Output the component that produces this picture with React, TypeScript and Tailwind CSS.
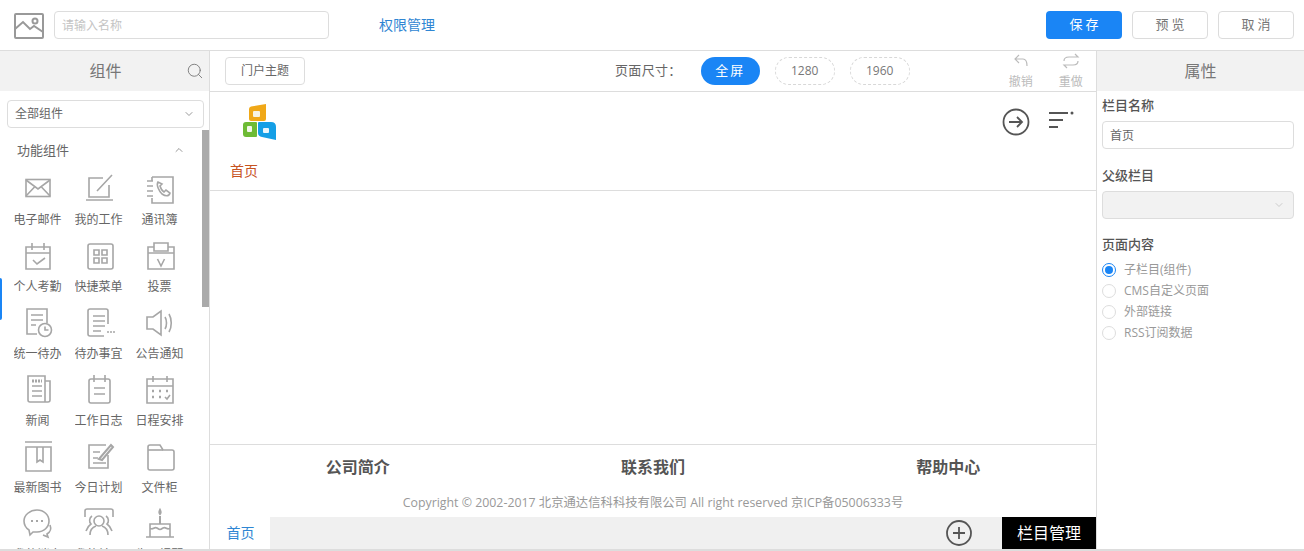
import { ReactNode } from 'react'
import { ChevronDown, ChevronUp, Search } from 'lucide-react'

const Svg = ({ children }: { children: ReactNode }) => (
  <svg
    viewBox="0 0 32 32"
    className="h-8 w-8"
    fill="none"
    stroke="#a6a6a6"
    strokeWidth="1.6"
  >
    {children}
  </svg>
)

const widgets: { label: string; icon: ReactNode }[] = [
  {
    label: '电子邮件',
    icon: (
      <>
        <rect x="4" y="7.5" width="24" height="17" />
        <path d="M4 8l12 9 12-9M4 24l9-9.5M28 24l-9-9.5" />
      </>
    ),
  },
  {
    label: '我的工作',
    icon: (
      <>
        <path d="M20 6H6v19h20V13" />
        <path d="M14 19L29 3M3 28h27" />
      </>
    ),
  },
  {
    label: '通讯簿',
    icon: (
      <>
        <path d="M8 5h21v26H8v-5M8 9V5" />
        <path d="M3 9h6M3 14h6M3 19h6M3 24h6" />
        <path d="M14 10c-2 3 1 9 4 12 3 2 7 3 8-1l-4-3-2 2c-2-1-3-3-4-6l2-2z" />
      </>
    ),
  },
  {
    label: '个人考勤',
    icon: (
      <>
        <path d="M4 8h24v22H4zM4 14h24M10 4v7M22 4v7" />
        <path d="M11 21l4 4 8-6" />
      </>
    ),
  },
  {
    label: '快捷菜单',
    icon: (
      <>
        <rect x="5" y="5" width="25" height="25" rx="2" />
        <path d="M11 11h5v5h-5zM19 11h5v5h-5zM11 19h5v5h-5zM19 19h5v5h-5z" />
      </>
    ),
  },
  {
    label: '投票',
    icon: (
      <>
        <path d="M10 8H4v22h26V8h-6" />
        <path d="M10 4h14v8H10zM4 14h26" />
        <path d="M13.5 20l3.5 7 3.500-7" />
      </>
    ),
  },
  {
    label: '统一待办',
    icon: (
      <>
        <path d="M15 28H5V3h20v14" />
        <path d="M9 9h12M9 14h12M9 19h5" />
        <circle cx="23" cy="24" r="6.500" />
        <path d="M23 20.500V24h3.500" />
      </>
    ),
  },
  {
    label: '待办事宜',
    icon: (
      <>
        <path d="M25 18V5a2 2 0 0 0-2-2H7a2 2 0 0 0-2 2v23a2 2 0 0 0 2 2h14" />
        <path d="M10 10h12M10 15h12M10 20h12M10 25h8" />
        <path d="M24 26h2M27 26h2M30 26h2" />
      </>
    ),
  },
  {
    label: '公告通知',
    icon: (
      <>
        <path d="M3 11h6l8-6v24l-8-6H3z" />
        <path d="M21 11c2 3 2 9 0 12M25 8c3 5 3 13 0 18" />
      </>
    ),
  },
  {
    label: '新闻',
    icon: (
      <>
        <path d="M6 3h17v26H8a2 2 0 0 1-2-2zM23 8h5v19a2 2 0 0 1-2 2h-3" />
        <path d="M10 13h10M10 18h10M10 23h10" />
        <path d="M10 8h10" strokeWidth="3" strokeDasharray="2 1" />
      </>
    ),
  },
  {
    label: '工作日志',
    icon: (
      <>
        <rect x="6" y="6" width="21" height="24" rx="2" />
        <path d="M11 2v7M22 2v7M11 15h11M11 21h11" />
      </>
    ),
  },
  {
    label: '日程安排',
    icon: (
      <>
        <path d="M3 6h26v24H3zM3 13h26M9 3v6M23 3v6" />
        <path
          d="M8 18h2M15 18h2M22 18h2M8 24h2M15 24h2"
          strokeWidth="2.500"
        />
        <path d="M21 24l2 2 3-4" />
      </>
    ),
  },
  {
    label: '最新图书',
    icon: (
      <>
        <path d="M3 2h27M4 7h25v24H4z" />
        <path d="M15 7v15l3-2 3 2V7" />
      </>
    ),
  },
  {
    label: '今日计划',
    icon: (
      <>
        <path d="M25 15v13H6V5h17" />
        <path d="M10 12h7M10 18h5M10 23h13" />
        <path d="M16 19l12-14 2 2-11 13z" strokeWidth="2" />
      </>
    ),
  },
  {
    label: '文件柜',
    icon: (
      <>
        <path d="M4 7a2 2 0 0 1 2-2h10l3 5h9a2 2 0 0 1 2 2v16a2 2 0 0 1-2 2H6a2 2 0 0 1-2-2z" />
        <path d="M4 10h15" />
      </>
    ),
  },
  {
    label: '我的消息',
    icon: (
      <>
        <path d="M15 3c7 0 12 5 12 11s-5 11-12 11l-4 0-3 3-1-5C4 21 2 18 2 14 2 8 8 3 15 3z" />
        <path d="M28 18c2 5 0 7-3 9l1 3-5-2" />
        <path d="M9 14h2M14 14h2M19 14h2" strokeWidth="2" />
      </>
    ),
  },
  {
    label: '我的社区',
    icon: (
      <>
        <path d="M2 10V4a2 2 0 0 1 2-2h24a2 2 0 0 1 2 2v6" />
        <circle cx="16" cy="14" r="5" />
        <path d="M7 28c0-6 3-8 6-9M25 28c0-6-3-8-6-9M9 9c-3 2-3 6-1 8-3 2-4 4-5 7M23 9c3 2 3 6 1 8 3 2 4 4 5 7" />
      </>
    ),
  },
  {
    label: '生日提醒',
    icon: (
      <>
        <path d="M2 30h28M6 30V17h20v13M6 21c3 3 4-2 7 0s3 2 6 0 4 3 7 0" />
        <path d="M16 17V9M16 3c-1 2-1 3 0 4 1-1 1-2 0-4z" strokeWidth="2" />
      </>
    ),
  },
]

const Logo = () => (
  <svg viewBox="0 0 33 36" className="h-9 w-[33px]">
    <path d="M6 5q0-2 2-2.500L23 0v15q0 2-2 2H8q-2 0-2-2z" fill="#f0a818" />
    <rect x="10" y="7" width="7" height="6" rx="1" fill="#f7f3e4" />
    <path d="M0 21q0-3 3-3h10q1 0 1 1v13q0 1-1 1H3q-3 0-3-3z" fill="#6ebb35" />
    <rect x="4" y="22" width="5" height="6" rx="1" fill="#f2f7ea" />
    <path d="M15 19q0-1 1-1h12q5 0 5 5v13l-14-3q-4-1-4-4z" fill="#159fe6" />
    <rect x="20" y="24" width="6" height="5" rx="1" fill="#eaf6fc" />
  </svg>
)

const TopButton = ({ text, primary }: { text: string; primary?: boolean }) => (
  <button
    className={`h-7 w-[76px] rounded pl-[3px] text-[13px] tracking-[3px] ${
      primary
        ? 'bg-[#1a85f5] text-white'
        : 'border border-[#dcdcdc] bg-white text-[#777]'
    }`}
  >
    {text}
  </button>
)

const Label = ({ text }: { text: string }) => (
  <div className="text-[13px] leading-5 font-medium text-[#555]">{text}</div>
)

const Radio = ({ text, checked }: { text: string; checked?: boolean }) => (
  <label className="flex h-[21px] items-center gap-2 text-xs text-[#999]">
    <span
      className={`flex h-3.5 w-3.5 items-center justify-center rounded-full border bg-white ${
        checked ? 'border-[#1a85f5]' : 'border-[#ddd]'
      }`}
    >
      {checked && <span className="h-2 w-2 rounded-full bg-[#1a85f5]" />}
    </span>
    {text}
  </label>
)

const DashedPill = ({ text }: { text: string }) => (
  <span className="flex h-7 w-[60px] items-center justify-center rounded-full border border-dashed border-[#d8d8d8] text-xs text-[#777]">
    {text}
  </span>
)

const App = () => {
  return (
    <div
      className="flex h-[551px] w-[1304px] flex-col overflow-hidden bg-white text-[#666]"
      style={{ fontFamily: '"Open Sans", "Noto Sans CJK SC", sans-serif' }}
    >
      {/* top bar */}
      <header className="flex h-[51px] shrink-0 items-center border-b border-[#ddd] pr-2.5 pl-3.5">
        <svg viewBox="0 0 30 26" className="mt-0.5 h-[26px] w-[30px]" fill="none" stroke="#999" strokeWidth="2">
          <rect x="1" y="1" width="28" height="24" rx="1" />
          <path d="M1 16l8-7 7 7 4-3 9 6" />
          <circle cx="21" cy="8" r="2.500" />
        </svg>
        <input
          placeholder="请输入名称"
          className="ml-2.5 h-7 w-[275px] rounded border border-[#ddd] px-[7px] text-xs placeholder:text-[#c4c4c4]"
        />
        <a className="ml-[50px] text-sm text-[#2f86d3]">权限管理</a>
        <div className="ml-auto flex gap-2.5">
          <TopButton text="保存" primary />
          <TopButton text="预览" />
          <TopButton text="取消" />
        </div>
      </header>

      <div className="flex min-h-0 flex-1 border-b-2 border-[#ddd]">
        {/* components panel */}
        <aside className="relative flex w-[210px] shrink-0 flex-col overflow-hidden border-r border-[#ddd]">
          <div className="relative flex h-10 shrink-0 items-center justify-center bg-[#f2f2f2] text-base text-[#777]">
            <span className="ml-[2px]">组件</span>
            <Search className="absolute top-[11px] right-[5px] h-[18px] w-[18px] text-[#777]" strokeWidth={1.2} />
          </div>
          <div className="mt-[9px] mr-[5px] ml-[7px] flex h-7 shrink-0 items-center justify-between rounded border border-[#ddd] pr-2 pl-[7px] text-xs">
            全部组件
            <ChevronDown className="h-3 w-3 text-[#999]" />
          </div>
          <div className="flex items-center justify-between pt-3 pr-6 pl-[17px] text-[13px] leading-5">
            功能组件
            <ChevronUp className="h-3 w-3 text-[#999]" />
          </div>
          <div className="grid grid-cols-[61px_61px_61px] pt-[12px] pl-[7px]">
            {widgets.map(w => (
              <div key={w.label} className="flex h-[67px] flex-col items-center">
                <Svg>{w.icon}</Svg>
                <span className="mt-[6px] w-12 overflow-hidden text-center text-xs leading-5 whitespace-nowrap">
                  {w.label}
                </span>
              </div>
            ))}
          </div>
          {/* scrollbar and active edge */}
          <span className="absolute top-[79px] right-0 h-[177px] w-[7px] bg-[#aaa]" />
          <span className="absolute top-[227px] left-0 h-[42px] w-0.5 rounded-r bg-[#1a85f5]" />
        </aside>

        {/* canvas */}
        <main className="flex min-w-0 flex-1 flex-col">
          <div className="flex h-[41px] shrink-0 items-center border-b border-[#ddd] pl-[15px]">
            <button className="h-7 w-20 rounded border border-[#ddd] text-xs">门户主题</button>
            <span className="ml-[310px] text-[13px] tracking-wide">页面尺寸：</span>
            <span className="ml-[19px] flex h-7 w-[59px] items-center justify-center rounded-full bg-[#1a85f5] text-[13px] tracking-[2px] text-white">
              全屏
            </span>
            <div className="ml-[15px] flex gap-[15px]">
              <DashedPill text="1280" />
              <DashedPill text="1960" />
            </div>
            <div className="ml-[99px] flex flex-col items-center text-xs leading-4 text-[#bbb]">
              <svg viewBox="0 0 18 16" className="h-4 w-[18px]" fill="none" stroke="#bbb" strokeWidth="1.200">
                <path d="M7 2L3 6l4 4M3 6h8c3 0 4 2 4 7" />
              </svg>
              <span className="mt-[5px]">撤销</span>
            </div>
            <div className="ml-[26px] flex flex-col items-center text-xs leading-4 text-[#bbb]">
              <svg viewBox="0 0 18 16" className="h-4 w-[18px]" fill="none" stroke="#bbb" strokeWidth="1.200">
                <path d="M2 8c0-3 2-4 5-4h9l-3-3M16 8c0 3-2 4-5 4H2l3 3" />
              </svg>
              <span className="mt-[5px]">重做</span>
            </div>
          </div>

          <div className="relative h-[99px] shrink-0 border-b border-[#ddd]">
            <div className="absolute top-3 left-[33px]">
              <Logo />
            </div>
            <svg viewBox="0 0 28 28" className="absolute top-4 right-[66px] h-7 w-7" fill="none" stroke="#555" strokeWidth="1.800">
              <circle cx="14" cy="14" r="12.500" />
              <path d="M7 14h13M15 9l5 5-5 5" />
            </svg>
            <svg viewBox="0 0 26 22" className="absolute top-[18px] right-[22px] h-[22px] w-[26px]" fill="none" stroke="#555" strokeWidth="1.800">
              <path d="M1 3h19M1 10h14M1 17h9" />
              <circle cx="24" cy="3" r="1.500" fill="#555" stroke="none" />
            </svg>
            <span className="absolute top-[69px] left-[20px] text-sm leading-5 text-[#c7531f]">首页</span>
          </div>

          <div className="flex-1" />

          {/* page footer */}
          <div className="flex h-[73px] shrink-0 flex-col border-t border-[#ddd]">
            <div className="grid grid-cols-3 pt-[11px] text-center text-base leading-[22px] font-bold text-[#555]">
              <span>公司简介</span>
              <span>联系我们</span>
              <span>帮助中心</span>
            </div>
            <p className="mt-[15px] text-center text-[12.35px] leading-5 text-[#999]">
              Copyright © 2002-2017 北京通达信科科技有限公司 All right reserved 京ICP备05006333号
            </p>
          </div>

          <div className="flex h-8 shrink-0 items-center bg-[#f0f0f0]">
            <span className="flex h-full w-[60px] items-center justify-center bg-white pl-px text-sm text-[#2f86d3]">
              首页
            </span>
            <svg viewBox="0 0 26 26" className="ml-auto h-[26px] w-[26px]" fill="none" stroke="#555" strokeWidth="1.800">
              <circle cx="13" cy="13" r="12" />
              <path d="M7 13h12M13 7v12" />
            </svg>
            <span className="ml-[30px] flex h-full w-[94px] items-center justify-center bg-black text-base text-white">
              栏目管理
            </span>
          </div>
        </main>

        {/* properties panel */}
        <aside className="flex w-[208px] shrink-0 flex-col border-l border-[#ddd]">
          <div className="flex h-10 shrink-0 items-center justify-center bg-[#f2f2f2] text-base text-[#777]">
            属性
          </div>
          <div className="flex flex-col pt-[4px] pr-[10px] pl-[5px]">
            <Label text="栏目名称" />
            <input
              defaultValue="首页"
              className="mt-1.5 h-7 rounded border border-[#ddd] px-[7px] text-xs text-[#666]"
            />
            <div className="mt-4">
              <Label text="父级栏目" />
            </div>
            <div className="mt-1.5 flex h-7 items-center justify-end rounded border border-[#ddd] bg-[#f2f2f2] px-2">
              <ChevronDown className="h-3 w-3 text-[#ccc]" />
            </div>
            <div className="mt-[15px] mb-[5px]">
              <Label text="页面内容" />
            </div>
            <Radio text="子栏目(组件)" checked />
            <Radio text="CMS自定义页面" />
            <Radio text="外部链接" />
            <Radio text="RSS订阅数据" />
          </div>
        </aside>
      </div>
    </div>
  )
}

export default App
